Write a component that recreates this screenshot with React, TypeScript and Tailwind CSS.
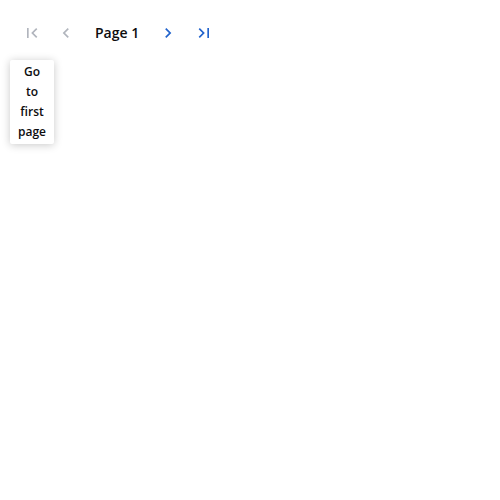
import React from "react";

type NavButtonProps = {
  label: string;
  path: string;
  disabled?: boolean;
  describedBy?: string;
};

function NavButton({ label, path, disabled, describedBy }: NavButtonProps) {
  return (
    <button
      type="button"
      aria-label={label}
      aria-describedby={describedBy}
      disabled={disabled}
      className="flex h-[34px] w-8 items-center justify-center rounded text-[#2263cc] disabled:text-[#b1b5bd]"
    >
      <svg viewBox="0 0 24 24" className="size-5" fill="currentColor" aria-hidden="true">
        <path d={path} />
      </svg>
    </button>
  );
}

export default function App() {
  return (
    <main className="min-h-screen bg-white p-4 font-['Open_Sans',sans-serif] text-[#0d0d0f]">
      <nav aria-label="Pagination" className="relative flex items-center">
        <div className="flex gap-0.5">
          <NavButton
            label="Go to first page"
            describedBy="first-page-tip"
            disabled
            path="M18.41 16.59L13.82 12l4.59-4.59L17 6l-6 6 6 6zM6 6h2v12H6z"
          />
          <NavButton
            label="Go to previous page"
            disabled
            path="M15.41 7.41L14 6l-6 6 6 6 1.41-1.41L10.83 12z"
          />
        </div>
        <span className="px-[13px] text-sm font-semibold">Page 1</span>
        <div className="flex gap-1">
          <NavButton
            label="Go to next page"
            path="M10 6L8.59 7.41 13.17 12l-4.58 4.59L10 18l6-6z"
          />
          <NavButton
            label="Go to last page"
            path="M5.59 7.41L10.18 12l-4.59 4.59L7 18l6-6-6-6zM16 6h2v12h-2z"
          />
        </div>
        <div
          id="first-page-tip"
          role="tooltip"
          className="absolute top-11 -left-1.5 w-11 rounded-xs bg-white px-2 py-0.5 text-center text-xs/5 font-semibold shadow-[0_1px_8px_rgba(0,0,0,0.22)]"
        >
          Go to first page
        </div>
      </nav>
    </main>
  );
}
